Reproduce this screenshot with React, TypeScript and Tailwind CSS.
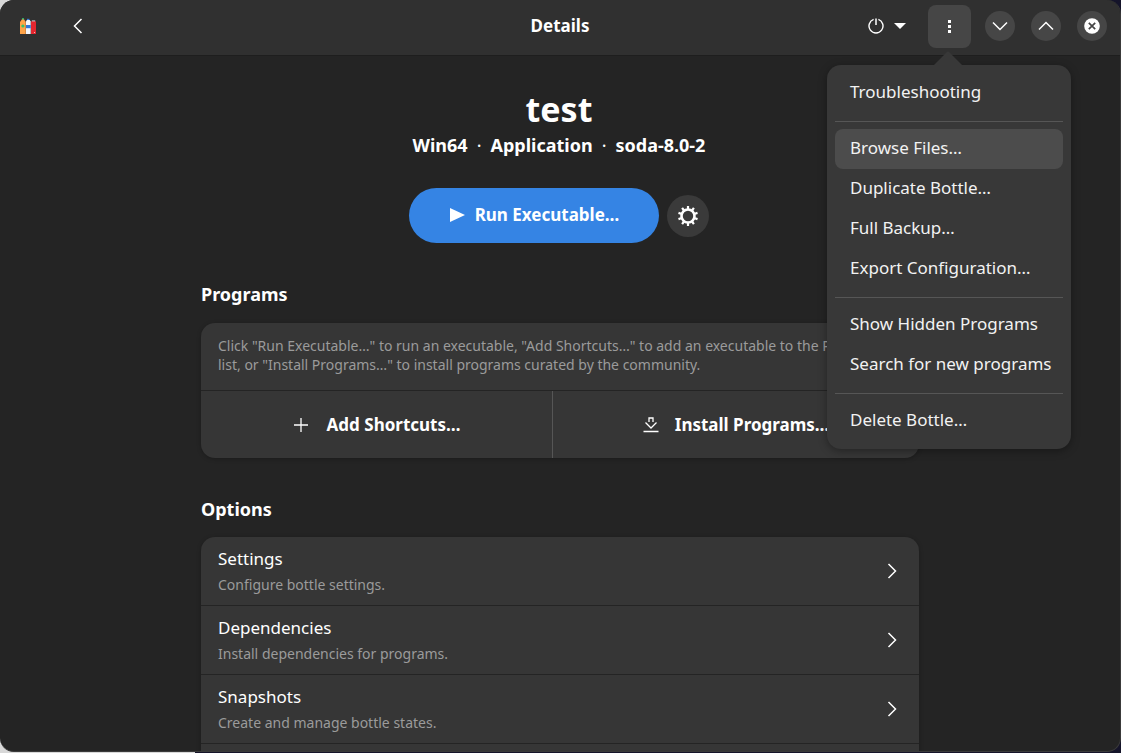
import { useState } from 'react';

type MenuEntry = { label: string };

const MENU_SECTIONS: MenuEntry[][] = [
  [{ label: 'Troubleshooting' }],
  [
    { label: 'Browse Files…' },
    { label: 'Duplicate Bottle…' },
    { label: 'Full Backup…' },
    { label: 'Export Configuration…' },
  ],
  [{ label: 'Show Hidden Programs' }, { label: 'Search for new programs' }],
  [{ label: 'Delete Bottle…' }],
];

const OPTIONS = [
  { title: 'Settings', subtitle: 'Configure bottle settings.' },
  { title: 'Dependencies', subtitle: 'Install dependencies for programs.' },
  { title: 'Snapshots', subtitle: 'Create and manage bottle states.' },
];

function AppLogo() {
  return (
    <svg className="h-[18px] w-4" viewBox="0 0 16 18" aria-hidden="true">
      <rect x="2" y="1" width="2" height="2" fill="#2ea866" />
      <path d="M1.8 2.5h2.4L5.8 5v12H0V5z" fill="#ffa348" />
      <circle cx="2.9" cy="9" r="1.6" fill="#33c26b" />
      <rect x="7" y="1.8" width="2.4" height="1.6" fill="#3d7fd6" />
      <path d="M6.8 3h3l.9 1.5V17H6V4.500z" fill="#f2f5fb" />
      <rect x="6" y="8" width="4.700" height="3.200" fill="#2f76d8" />
      <path d="M11 5l.8-1h3.400l.8 1v12h-5z" fill="#e3262f" />
      <rect x="11.800" y="3.400" width="3.400" height="1" fill="#c9c9cf" />
      <rect x="14" y="15" width="1" height="1" fill="#f3b4b7" />
    </svg>
  );
}

function Chevron({ d, className }: { d: string; className: string }) {
  return (
    <svg className={className} viewBox="0 0 16 16" fill="none" stroke="currentColor" strokeWidth="1.5" aria-hidden="true">
      <path d={d} />
    </svg>
  );
}

function PowerIcon() {
  return (
    <svg className="size-4" viewBox="0 0 16 16" fill="none" stroke="currentColor" aria-hidden="true">
      <path d="M5.6 1.400a7 7 0 1 0 4.800 0" strokeWidth="1.400" />
      <path d="M8 0.500v6.500" strokeWidth="1.500" />
    </svg>
  );
}

function GearIcon() {
  return (
    <svg className="size-5" viewBox="0 0 20 20" fill="none" stroke="currentColor" aria-hidden="true">
      <circle cx="10" cy="10" r="6.500" strokeWidth="2.600" />
      {[0, 36, 72, 108, 144, 180, 216, 252, 288, 324].map((angle) => (
        <path key={angle} d="M10 3.500V0" strokeWidth="2.200" transform={`rotate(${angle} 10 10)`} />
      ))}
    </svg>
  );
}

function DownloadIcon() {
  return (
    <svg className="size-4" viewBox="0 0 16 16" fill="none" stroke="currentColor" strokeWidth="1.300" aria-hidden="true">
      <path d="M6 5V1h4v4" />
      <path d="M2.500 5.500L8 11l5.500-5.500" />
      <path d="M0.500 14.500h15" />
    </svg>
  );
}

function BottleMenu() {
  const [active, setActive] = useState('Browse Files…');

  return (
    <div
      role="menu"
      className="absolute top-[60px] right-[-100px] z-20 w-[244px] rounded-[14px] bg-[#383838] p-2 text-[17px] text-[#f2f2f2] shadow-[0_2px_8px_rgba(0,0,0,0.35)]"
    >
      <svg className="absolute -top-[14px] left-[106px] h-[15px] w-[30px]" viewBox="0 0 30 15" aria-hidden="true">
        <path d="M0 15L14 1q1-1 2 0l14 14z" fill="#383838" />
      </svg>
      {MENU_SECTIONS.map((section, i) => (
        <div key={section[0].label}>
          {i > 0 && <div role="separator" className="mt-2 mb-[7px] h-px bg-[#565656]" />}
          {section.map(({ label }) => (
            <button
              key={label}
              type="button"
              role="menuitem"
              onMouseEnter={() => setActive(label)}
              className={`block h-10 w-full rounded-lg pr-3 pb-0.5 pl-[15px] text-left whitespace-nowrap ${
                active === label ? 'bg-[#4c4c4c]' : ''
              }`}
            >
              {label}
            </button>
          ))}
        </div>
      ))}
    </div>
  );
}

function HeaderBar() {
  const [menuOpen, setMenuOpen] = useState(true);

  return (
    <header className="grid h-14 shrink-0 grid-cols-[1fr_auto_1fr] items-center border-b border-[#1e1e1e] bg-[#303030] pr-[13px] pb-[3px] pl-5">
      <div className="flex items-center gap-8">
        <AppLogo />
        <button type="button" aria-label="Back" className="p-0.5">
          <Chevron d="M11.500 1L4.500 8l7 7" className="size-4" />
        </button>
      </div>
      <h1 className="pr-[7px] text-[17px] leading-6 font-bold">Details</h1>
      <div className="flex items-center justify-end gap-4">
        <button type="button" aria-label="Power" className="mr-1.5 flex items-center gap-2.5">
          <PowerIcon />
          <svg className="h-1.5 w-3" viewBox="0 0 12 6" aria-hidden="true">
            <path d="M0 0h12L6 6z" fill="currentColor" />
          </svg>
        </button>
        <div className="relative -mr-0.5">
          <button
            type="button"
            aria-label="Menu"
            aria-expanded={menuOpen}
            onClick={() => setMenuOpen(!menuOpen)}
            className="flex size-[43px] items-center justify-center rounded-lg bg-[#464646]"
          >
            <svg className="h-[13px] w-[3px]" viewBox="0 0 3 13" fill="currentColor" aria-hidden="true">
              <path d="M0 0h3v3H0zM0 5h3v3H0zM0 10h3v3H0z" />
            </svg>
          </button>
          {menuOpen && <BottleMenu />}
        </div>
        <button type="button" aria-label="Minimize" className="flex size-[30px] items-center justify-center rounded-full bg-[#464646]">
          <Chevron d="M1 4.500l7 7 7-7" className="size-4" />
        </button>
        <button type="button" aria-label="Maximize" className="flex size-[30px] items-center justify-center rounded-full bg-[#464646]">
          <Chevron d="M1 11.500l7-7 7 7" className="size-4" />
        </button>
        <button type="button" aria-label="Close" className="flex size-[30px] items-center justify-center rounded-full bg-[#464646]">
          <svg className="size-4" viewBox="0 0 16 16" aria-hidden="true">
            <circle cx="8" cy="8" r="7.800" fill="#fff" />
            <path d="M4.800 4.800l6.400 6.400M11.200 4.800l-6.400 6.400" stroke="#464646" strokeWidth="1.700" />
          </svg>
        </button>
      </div>
    </header>
  );
}

export default function App() {
  return (
    <div className="h-screen overflow-hidden bg-[linear-gradient(to_right,#d8d8d8_195px,#15142a_195px)] pb-px font-['Noto_Sans',sans-serif] text-white">
      <div className="flex h-full flex-col overflow-hidden rounded-[14px] border-r border-b border-[#3a3a3a] bg-[#242424]">
        <HeaderBar />

        <main className="min-h-0 flex-1 overflow-hidden px-6">
          <div className="mx-auto max-w-[718px]">
            {/* Bottle name and details */}
            <div className="flex flex-col items-center pt-[31px] pr-0.5">
              <h2 className="text-[34px] leading-[44px] font-bold">test</h2>
              <p className="flex gap-[9px] text-[18px] leading-7 font-bold">
                <span>Win64</span>
                <span className="font-normal">·</span>
                <span>Application</span>
                <span className="font-normal">·</span>
                <span>soda-8.0-2</span>
              </p>
              <div className="mt-[29px] flex items-center gap-2">
                <button
                  type="button"
                  className="flex h-[55px] w-[250px] items-center justify-center gap-2.5 rounded-full bg-[#3584e4] pb-0.5 text-[17px] font-bold"
                >
                  <svg className="size-4" viewBox="0 0 16 16" aria-hidden="true">
                    <path d="M1 1l15 7-15 7z" fill="currentColor" />
                  </svg>
                  Run Executable…
                </button>
                <button
                  type="button"
                  aria-label="Launch options"
                  className="flex size-[42px] items-center justify-center rounded-full bg-[#3a3a3a]"
                >
                  <GearIcon />
                </button>
              </div>
            </div>

            {/* Programs */}
            <section className="mt-[39px]">
              <h3 className="text-[18px] leading-6 font-bold">Programs</h3>
              <div className="mt-[17px] overflow-hidden rounded-[14px] bg-[#363636] shadow-[0_1px_4px_rgba(0,0,0,0.25)]">
                <p className="border-b border-[#242424] px-[17px] pt-[13px] pb-4 text-[14px] leading-[19px] text-[#9b9b9b]">
                  Click "Run Executable…" to run an executable, "Add Shortcuts…" to add an executable to the Programs
                  list, or "Install Programs…" to install programs curated by the community.
                </p>
                <div className="flex text-[17px] font-bold">
                  <button type="button" className="flex h-[67px] flex-auto items-center justify-center gap-[18px] px-0.5">
                    <svg className="size-4" viewBox="0 0 16 16" stroke="currentColor" strokeWidth="1.300" aria-hidden="true">
                      <path d="M8 1v14M1 8h14" />
                    </svg>
                    Add Shortcuts…
                  </button>
                  <button
                    type="button"
                    className="flex h-[67px] flex-auto items-center justify-center gap-4 border-l border-[#565656]"
                  >
                    <DownloadIcon />
                    Install Programs…
                  </button>
                </div>
              </div>
            </section>

            {/* Options */}
            <section className="mt-[39px]">
              <h3 className="text-[18px] leading-6 font-bold">Options</h3>
              <div className="mt-4 overflow-hidden rounded-[14px] bg-[#363636] shadow-[0_1px_4px_rgba(0,0,0,0.25)]">
                {OPTIONS.map((option) => (
                  <button
                    key={option.title}
                    type="button"
                    className="flex h-[69px] w-full items-center justify-between border-b border-[#242424] pr-[19px] pl-[17px] text-left"
                  >
                    <span className="flex flex-col">
                      <span className="text-[17px] leading-7">{option.title}</span>
                      <span className="text-[14px] leading-6 text-[#9b9b9b]">{option.subtitle}</span>
                    </span>
                    <Chevron d="M4.500 1l7 7-7 7" className="size-4" />
                  </button>
                ))}
                <div className="h-16" />
              </div>
            </section>
          </div>
        </main>
      </div>
    </div>
  );
}
